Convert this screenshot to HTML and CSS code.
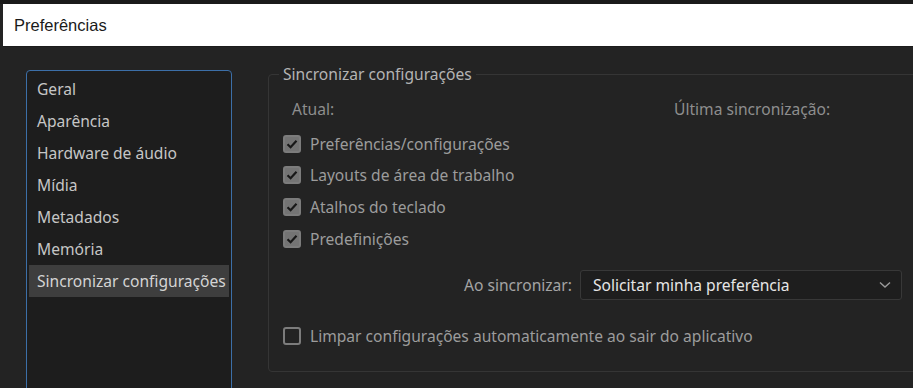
FILE: index.html
```html
<!DOCTYPE html>
<html lang="pt-BR">
<head>
    <meta charset="UTF-8">
    <title>Preferências</title>
    <link rel="stylesheet" href="styles.css">
</head>
<body>
    <div class="top-strip"></div>
    <div class="title-bar">Preferências</div>

    <div class="main">
        <ul class="sidebar">
            <li>Geral</li>
            <li>Aparência</li>
            <li>Hardware de áudio</li>
            <li>Mídia</li>
            <li>Metadados</li>
            <li>Memória</li>
            <li class="active">Sincronizar configurações</li>
        </ul>

        <fieldset class="group">
            <legend>Sincronizar configurações</legend>

            <div class="status-row">
                <span class="current">Atual:</span>
                <span>Última sincronização:</span>
            </div>

            <label class="check"><span class="box checked"></span>Preferências/configurações</label>
            <label class="check"><span class="box checked"></span>Layouts de área de trabalho</label>
            <label class="check"><span class="box checked"></span>Atalhos do teclado</label>
            <label class="check"><span class="box checked"></span>Predefinições</label>

            <div class="sync-row">
                <span class="sync-label">Ao sincronizar:</span>
                <div class="select">
                    <span>Solicitar minha preferência</span>
                    <svg width="12" height="8" viewBox="0 0 12 8"><path d="M1 1.5 L6 6 L11 1.5" fill="none" stroke="#9a9a9a" stroke-width="1.4"/></svg>
                </div>
            </div>

            <label class="check clear-row"><span class="box"></span>Limpar configurações automaticamente ao sair do aplicativo</label>
        </fieldset>
    </div>
</body>
</html>
```

FILE: styles.css
```css
* {
    box-sizing: border-box;
    margin: 0;
    padding: 0;
}

body {
    font-family: "Noto Sans", "Open Sans", sans-serif;
    font-size: 15.6px;
    background-color: #232323;
    color: #c6c6c6;
    height: 388px;
    overflow: hidden;
}

.top-strip {
    height: 4px;
    background-color: #1a1a1a;
}

.title-bar {
    height: 43px;
    margin-left: 3px;
    padding-left: 11px;
    line-height: 43px;
    background-color: #fff;
    color: #1a1a1a;
    font-family: "Liberation Sans", Arial, sans-serif;
    font-size: 16.5px;
    border-bottom: 1px solid #1c1c1c;
}

.main {
    display: flex;
    padding: 23px 0 0 26px;
    gap: 36px;
}

.sidebar {
    list-style: none;
    width: 206px;
    height: 340px;
    flex-shrink: 0;
    padding: 2px 2px;
    background-color: #1d1d1d;
    border: 1px solid #3c6fa8;
    border-radius: 4px;
}

.sidebar li {
    height: 32px;
    line-height: 32px;
    padding-left: 8px;
    white-space: nowrap;
}

.sidebar li.active {
    background-color: #3e3e3e;
    color: #d4d4d4;
}

.group {
    flex: 1;
    margin-right: -20px;
    margin-top: -5px;
    height: 307px;
    border: 1px solid #353535;
    border-radius: 4px;
    padding: 0 0 0 14px;
}

.group legend {
    margin-left: -4px;
    padding: 0 4px;
    color: #b4b4b4;
    line-height: 18px;
}

.status-row {
    display: flex;
    padding: 15px 0 0 9px;
    height: 45px;
    line-height: 22px;
    color: #8e8e8e;
}

.current {
    width: 382px;
}

.check {
    display: flex;
    align-items: center;
    gap: 9px;
    height: 31.6px;
    color: #9c9c9c;
    white-space: nowrap;
}

.box {
    width: 18px;
    height: 18px;
    border-radius: 3px;
    border: 2px solid #7c7c7c;
    flex-shrink: 0;
}

.box.checked {
    background-color: #747474;
    background-image: url("data:image/svg+xml,%3Csvg xmlns='http://www.w3.org/2000/svg' width='14' height='14' viewBox='0 0 14 14'%3E%3Cpath d='M2.5 7.2 L5.6 10.2 L11.5 3.8' fill='none' stroke='%23181818' stroke-width='2.2'/%3E%3C/svg%3E");
    background-repeat: no-repeat;
    background-position: center;
}

.sync-row {
    display: flex;
    align-items: center;
    justify-content: flex-end;
    margin-top: 16px;
    padding-right: 30px;
}

.sync-label {
    color: #a4a4a4;
    margin-right: 8px;
}

.select {
    display: flex;
    align-items: center;
    justify-content: space-between;
    width: 322px;
    height: 30px;
    padding: 0 10px 0 12px;
    background-color: #1e1e1e;
    border: 1px solid #383838;
    border-radius: 3px;
    color: #e6e6e6;
}

.clear-row {
    margin-top: 20px;
}
```
